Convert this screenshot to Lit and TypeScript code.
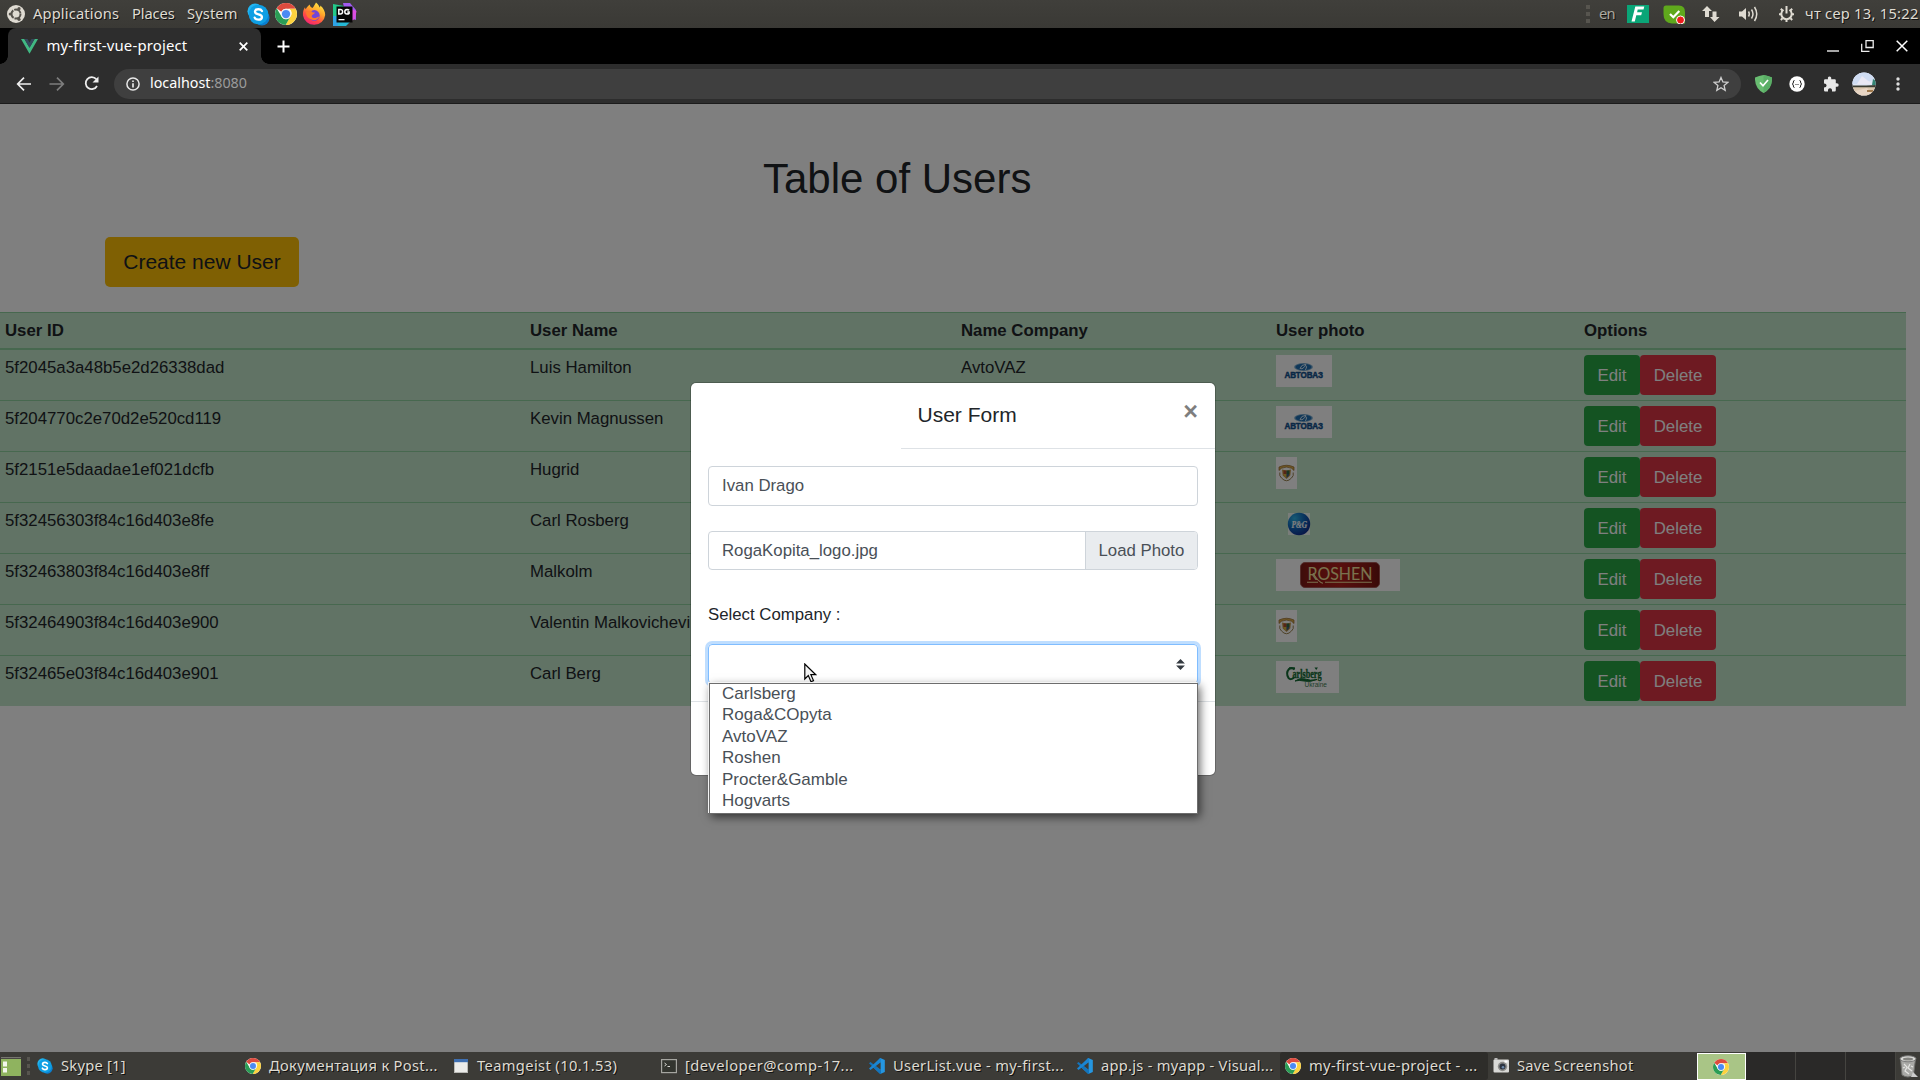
import { LitElement, html, css, nothing } from "lit";
import { customElement, property } from "lit/decorators.js";

const chromeIcon = (size: number) => html`<svg width=${size} height=${size} viewBox="0 0 24 24">
  <circle cx="12" cy="12" r="12" fill="#fff" />
  <path d="M12 0A12 12 0 0 1 22.6 6.4H12A5.6 5.6 0 0 0 6.9 9.6L1.8 5.7A12 12 0 0 1 12 0z" fill="#dd4b3e" />
  <path d="M22.6 6.4A12 12 0 0 1 11.6 24L16.9 14.8A5.6 5.6 0 0 0 15.5 6.4z" fill="#fdd23e" />
  <path d="M1.8 5.7L7.1 14.8A5.6 5.6 0 0 0 16.9 14.8L11.6 24A12 12 0 0 1 1.8 5.7z" fill="#2a9d55" />
  <circle cx="12" cy="12" r="5.6" fill="#f1f1f1" />
  <circle cx="12" cy="12" r="4.5" fill="#4a8af4" />
</svg>`;

const skypeIcon = (size: number) => html`<svg width=${size} height=${size} viewBox="0 0 24 24">
  <circle cx="8.5" cy="8.5" r="8" fill="#22b5f0" />
  <circle cx="15.5" cy="15.5" r="8" fill="#0b7fd0" />
  <circle cx="12" cy="12" r="10.3" fill="#0e9fe4" />
  <path d="M15.6 8.4C14.9 7 13.600 6.500 12 6.500c-2.200 0-3.700 1-3.700 2.700 0 3.700 7.300 1.800 7.300 5.300 0 1.800-1.500 2.900-3.700 2.900-1.900 0-3.300-.7-3.900-2.200" fill="none" stroke="#fff" stroke-width="2.400" stroke-linecap="round" />
</svg>`;

const vscodeIcon = html`<svg width="16" height="18" viewBox="0 0 16 18">
  <path d="M11.300 1L15.800 3V15L11.300 17L3.500 9.800z" fill="#2596e0" />
  <path d="M0 6.200L1.500 5L12 13.200V17H11.200z" fill="#1274bd" />
  <path d="M0 11.600L1.500 12.900L12 4.800V1H11.200z" fill="#1a85d2" />
  <path d="M11.600 5.300V12.700L6.800 9z" fill="#3c3b37" />
</svg>`;

const firefoxIcon = html`<svg width="24" height="24" viewBox="0 0 24 24">
  <defs>
    <linearGradient id="ff" x1="0.8" y1="0" x2="0.25" y2="1">
      <stop offset="0" stop-color="#fff04a" /><stop offset=".4" stop-color="#ffa42a" />
      <stop offset=".7" stop-color="#ff4b45" /><stop offset="1" stop-color="#f5207a" />
    </linearGradient>
  </defs>
  <path d="M14 .5c2 1.500 3.200 3.500 3.600 5 .7-.4.800-1.300.7-2C21.500 6 23.300 9.500 23.200 13A11.200 11 0 0 1 1 13.500C.600 10 1.700 7 3 5.200c.1 1 .4 1.500.8 2C5.500 3.800 7.300 3.300 7.800 2.500c0 1.500.7 2.700 2.700 3.400C12 4.500 12.800 2.300 14 .5z" fill="url(#ff)" />
  <circle cx="12.300" cy="13.500" r="5.400" fill="#7446d8" />
  <path d="M4 10c3-2 5.500-1.500 6.700.5h2.300c-.6 1.800-2.500 1.700-3.200 3.300-.5 1.200.8 2.500 2.400 2.300 2-.2 3-.8 5.200-1.600-1.200 3.300-4.500 4.200-7.500 3.300C6 16.500 4 14 4 10z" fill="#ff7a2c" />
</svg>`;

const datagripIcon = html`<svg width="25" height="25" viewBox="0 0 25 25">
  <path d="M1 2L12 4L10 13L1 23z" fill="#23c98a" />
  <path d="M11 1L18 1L24 8L24 18L14 14z" fill="#a05bf0" />
  <path d="M1 22L11 16L18 20L14 24L3 24z" fill="#26b9d6" />
  <path d="M19 7L24.500 9L23 17L19 19z" fill="#dd4ee0" />
  <path d="M1 14L6 14V24L1 24z" fill="#2fa4e6" />
  <rect x="4.500" y="4.500" width="16" height="16" fill="#060606" />
  <path d="M6.800 7.500V12H8.200Q10.600 12 10.600 9.700T8.200 7.500zM17.200 8.300Q16.200 7.400 15 7.400Q12.800 7.500 12.800 9.800T15 12.100Q16.400 12.100 17.100 11.400V10H15.300" fill="none" stroke="#fff" stroke-width="1.500" />
  <rect x="6.500" y="17" width="6" height="1.300" fill="#fff" />
</svg>`;

const AVTOVAZ = html`<svg width="56" height="32" viewBox="0 0 56 32">
  <rect width="56" height="32" fill="#fff" />
  <ellipse cx="27.500" cy="12" rx="9.500" ry="4" fill="#8fb9d8" />
  <ellipse cx="27.500" cy="12" rx="8.200" ry="3.300" fill="#1f6fb2" />
  <path d="M24 13.500q1-4 6-4.200q-1 3-4 4.500zM29 9.500q3 2 .5 5.500" fill="none" stroke="#d3e8f7" stroke-width="1" />
  <text x="8.500" y="23.400" textLength="38.500" lengthAdjust="spacingAndGlyphs" font-family="Liberation Sans, Arial, sans-serif" font-weight="700" font-size="9" fill="#12508c" stroke="#12508c" stroke-width=".5">АВТОВАЗ</text>
</svg>`;

const HOGWARTS = html`<svg width="21" height="32" viewBox="0 0 21 32">
  <rect width="21" height="32" fill="#fff" />
  <path d="M3 13.500V10Q10.500 6.500 18 10V13.500L15.500 11.200Q10.500 9 5.500 11.200z" fill="#d9aa4a" stroke="#93692a" stroke-width=".7" />
  <path d="M6 12.500L10.500 13.500L15 12.500L14.300 18.500L10.500 22L6.700 18.500z" fill="#c99a4a" />
  <path d="M7.500 13.500h3v3.500h-3z" fill="#b04a30" /><path d="M10.500 13.500h3v3.500h-3z" fill="#2f6a4a" />
  <path d="M7.500 17h3v4Q8 19.500 7.500 17z" fill="#d8b43c" /><path d="M10.500 17h3Q13 19.500 10.500 21z" fill="#3f5f80" />
  <path d="M3.800 15.500Q3 19 5.500 21Q10.500 26.500 15.500 21Q18 19 17.200 15.500" fill="none" stroke="#9c8450" stroke-width="1" />
</svg>`;

const PG = html`<svg width="44" height="32" viewBox="0 0 44 32">
  <defs><radialGradient id="pg" cx=".3" cy=".25" r=".9">
    <stop offset="0" stop-color="#2fb4e8" /><stop offset=".5" stop-color="#1065ba" /><stop offset="1" stop-color="#101f86" />
  </radialGradient></defs>
  <rect x="12" y="5" width="22" height="22" fill="#fff" opacity=".8" />
  <circle cx="23" cy="16" r="11.200" fill="url(#pg)" />
  <text x="15.500" y="19.600" textLength="15.500" lengthAdjust="spacingAndGlyphs" font-family="Liberation Serif, serif" font-weight="700" font-style="italic" font-size="11" fill="#fff" stroke="#fff" stroke-width=".2">P&amp;G</text>
</svg>`;

const ROSHEN = html`<svg width="124" height="32" viewBox="0 0 124 32">
  <defs><linearGradient id="ro"><stop offset="0" stop-color="#7a1a16" /><stop offset=".12" stop-color="#921a16" />
    <stop offset=".5" stop-color="#b01e1c" /><stop offset=".9" stop-color="#861814" /><stop offset="1" stop-color="#701412" /></linearGradient></defs>
  <rect width="124" height="32" fill="#fff" />
  <rect x="24.500" y="3.500" width="79" height="25" rx="4.500" fill="url(#ro)" stroke="#a85a56" />
  <text x="31.500" y="21" textLength="65" lengthAdjust="spacingAndGlyphs" font-family="Lato, sans-serif" font-size="17.500" fill="#f3e49c">ROSHEN</text>
  <path d="M31 23.200H42M49 23.200H96M37 14Q42 23 47 24.200" stroke="#f3e49c" fill="none" stroke-width="1.100" />
</svg>`;

const CARLSBERG = html`<svg width="63" height="32" viewBox="0 0 63 32">
  <rect width="63" height="32" fill="#fff" />
  <path d="M18.500 8.500Q16 5.800 13 8Q9.500 12 12.500 17Q15 19.500 18 16.500" fill="none" stroke="#146b34" stroke-width="2" />
  <path d="M13 7.300H19" stroke="#146b34" stroke-width="2" />
  <text x="16.500" y="16.500" textLength="29" lengthAdjust="spacingAndGlyphs" font-family="Liberation Serif, serif" font-weight="700" font-size="11.500" fill="#146b34" stroke="#146b34" stroke-width=".4">arlsberg</text>
  <path d="M38.500 6.500H42L40.200 9z" fill="#146b34" />
  <path d="M19 20Q24 16.500 29 18Q34 20 41 18.500Q34 21.500 28 20Q23 18.800 19 20z" fill="#146b34" stroke="#146b34" />
  <text x="28.500" y="25.500" textLength="22.500" lengthAdjust="spacingAndGlyphs" font-family="Liberation Sans, sans-serif" font-size="6.800" fill="#3f7d54">Ukraine</text>
</svg>`;

const USERS = [
  { id: "5f2045a3a48b5e2d26338dad", name: "Luis Hamilton", company: "AvtoVAZ", photo: AVTOVAZ },
  { id: "5f204770c2e70d2e520cd119", name: "Kevin Magnussen", company: "", photo: AVTOVAZ },
  { id: "5f2151e5daadae1ef021dcfb", name: "Hugrid", company: "", photo: HOGWARTS },
  { id: "5f32456303f84c16d403e8fe", name: "Carl Rosberg", company: "", photo: PG },
  { id: "5f32463803f84c16d403e8ff", name: "Malkolm", company: "", photo: ROSHEN },
  { id: "5f32464903f84c16d403e900", name: "Valentin Malkovichevi", company: "", photo: HOGWARTS },
  { id: "5f32465e03f84c16d403e901", name: "Carl Berg", company: "", photo: CARLSBERG },
];

const COMPANIES = ["Carlsberg", "Roga&COpyta", "AvtoVAZ", "Roshen", "Procter&Gamble", "Hogvarts"];

/** Top desktop panel: menus, launchers, indicators. */
@customElement("desktop-panel")
export class DesktopPanel extends LitElement {
  static styles = css`
    :host { display: flex; height: 28px; background: linear-gradient(#403f3b, #3a3935); color: #dfdbd2;
      font: 14.7px/26px "Noto Sans", "Open Sans", sans-serif; text-shadow: 1px 1px 0 #111; white-space: nowrap; }
    svg { display: block; flex: none; }
    .logo { width: 33px; padding-left: 7px; box-sizing: border-box; display: flex; align-items: center; }
    .apps { width: 99px; letter-spacing: 0.14px; }
    .places { width: 55px; letter-spacing: -0.1px; }
    .system { width: 57px; letter-spacing: 0.1px; }
    .cell { width: 28px; display: flex; align-items: center; justify-content: center; }
    .cell.dg { width: 33px; }
    .tray { margin-left: auto; width: 334px; display: flex; align-items: center; }
    .grip { width: 13px; display: grid; gap: 3px; }
    .grip i { width: 4px; height: 4px; background: #57554f; }
    .lang { width: 28px; color: #aba89f; height: 28px; letter-spacing: -0.9px; }
    .slot { display: flex; align-items: center; height: 28px; }
    .w36 { width: 36px; } .w39 { width: 39px; } .w37 { width: 37px; } .w27 { width: 27px; }
    .clock { height: 28px; letter-spacing: 0.27px; }
  `;
  render() {
    return html`
      <span class="logo"><svg width="18" height="18" viewBox="0 0 18 18">
        <circle cx="9" cy="9" r="9" fill="#dfdbd2" />
        <circle cx="9" cy="9" r="4.500" fill="none" stroke="#55524c" stroke-width="2" stroke-dasharray="8.400 1" />
        <circle cx="3.300" cy="9" r="1.600" fill="#55524c" /><circle cx="12" cy="3.700" r="1.600" fill="#55524c" /><circle cx="12" cy="14.300" r="1.600" fill="#55524c" />
      </svg></span>
      <span class="apps">Applications</span><span class="places">Places</span><span class="system">System</span>
      <span class="cell">${skypeIcon(23)}</span>
      <span class="cell">${chromeIcon(22)}</span>
      <span class="cell">${firefoxIcon}</span>
      <span class="cell dg">${datagripIcon}</span>
      <div class="tray">
        <span class="grip"><i></i><i></i><i></i></span>
        <span class="lang">en</span>
        <span class="slot w36"><svg width="22" height="18" viewBox="0 0 22 18"><rect width="22" height="18" fill="#0aa577" /><path d="M8.300 1.500H17.300L16.500 4.600H10.700L10.100 7.300H15L14.200 10.200H9.300L7.800 16.500H4.500z" fill="#fff" /></svg></span>
        <span class="slot w39"><svg width="23" height="19" viewBox="0 0 23 19"><path d="M3 .5H16Q22 .5 22 7V18.500H9Q.500 18 .500 9V3Q.500.5 3 .5z" fill="#5fa81c" /><path d="M7 9L10.300 12.200L16.300 6" fill="none" stroke="#fff" stroke-width="2.200" /><circle cx="17.500" cy="15" r="4" fill="#ee1c1c" stroke="#fff" /></svg></span>
        <span class="slot w37"><svg width="18" height="18" viewBox="0 0 18 18" fill="#dfdbd2"><path d="M5 1L10 6H7V12H3V6H0z" /><path d="M12.500 17L8 12H10.500V6.500H14.500V12H17.500z" /></svg></span>
        <span class="slot w39"><svg width="20" height="18" viewBox="0 0 20 18"><path d="M0 6.500H3L7 3V15L3 11.500H0z" fill="#dfdbd2" /><path d="M9.500 6.500Q11 9 9.500 11.500M12.500 4.500Q15.500 9 12.500 13.500M15.500 2Q20 9 15.500 16" fill="none" stroke="#dfdbd2" stroke-width="1.500" /></svg></span>
        <span class="slot w27"><svg width="17" height="18" viewBox="0 0 17 18" fill="none" stroke="#dfdbd2"><path d="M5.500 4.800A5.200 5.200 0 1 0 11.500 4.800" stroke-width="2" /><path d="M8.500 1V8.500" stroke-width="2" /><path d="M1 9.300H3M14 9.300H16M8.500 14.500V17M2.800 3.800L4.500 5.400M14.200 3.800L12.500 5.400M2.800 14.900L4.500 13.300M14.200 14.900L12.500 13.300" stroke-width="2" /></svg></span>
        <span class="clock">чт сер 13, 15:22</span>
      </div>`;
  }
}

/** Browser tab strip and address toolbar. */
@customElement("browser-chrome")
export class BrowserChrome extends LitElement {
  static styles = css`
    :host { display: flex; flex-direction: column; height: 76px; font-family: "Noto Sans", "Open Sans", sans-serif; color: #fff; white-space: nowrap; }
    svg { display: block; flex: none; }
    .strip { height: 36px; background: #000; display: flex; align-items: stretch; }
    .corner { width: 8px; background: radial-gradient(circle at 0 0, #000 7.500px, #2d2d2d 8px) bottom / 8px 8px no-repeat; }
    .corner.right { background-image: radial-gradient(circle at 100% 0, #000 7.500px, #2d2d2d 8px); }
    .tab { width: 253px; box-sizing: border-box; background: #2d2d2d; border-radius: 8px 8px 0 0; display: flex; align-items: center; padding: 0 13px 0 13px; }
    .title { margin-left: 8.500px; font-size: 14.900px; letter-spacing: 0.17px; line-height: 34px; height: 36px; flex: 1; }
    .plus { width: 29px; display: flex; align-items: center; justify-content: center; }
    .win { margin-left: auto; display: flex; align-items: center; gap: 22px; padding-right: 12px; }
    .bar { height: 39px; background: #2d2d2d; border-bottom: 1px solid #1b1b1b; display: flex; align-items: center; }
    .nav { width: 114px; display: flex; align-items: center; padding-left: 15.500px; gap: 17.500px; box-sizing: border-box; }
    .omni { width: 1627px; height: 30px; border-radius: 15px; background: #3f3f3f; display: flex; align-items: center; padding: 0 12px; box-sizing: border-box; }
    .url { margin-left: 10px; font-size: 14.300px; flex: 1; line-height: 28px; height: 30px; }
    .url span { color: #9b9b9b; }
    .ext { display: flex; padding-left: 6px; }
    .ext span { width: 33.500px; display: flex; justify-content: center; align-items: center; }
  `;
  render() {
    return html`
      <div class="strip">
        <span class="corner"></span>
        <div class="tab">
          <svg width="17" height="15" viewBox="0 0 17 15"><path d="M0 0H3.400L8.500 8.800L13.600 0H17L8.500 14.700z" fill="#41b883" /><path d="M3.400 0H6.500L8.500 3.500L10.500 0H13.600L8.500 8.800z" fill="#35495e" /></svg>
          <span class="title">my-first-vue-project</span>
          <svg width="9" height="9" viewBox="0 0 9 9"><path d="M.700.700L8.300 8.300M8.300.700L.700 8.300" stroke="#fff" stroke-width="1.700" /></svg>
        </div>
        <span class="corner right"></span>
        <span class="plus"><svg width="13" height="13" viewBox="0 0 13 13"><path d="M6.500.500V12.500M.500 6.500H12.500" stroke="#fff" stroke-width="2" /></svg></span>
        <div class="win">
          <svg width="12" height="12" viewBox="0 0 12 12"><path d="M0 11H12" stroke="#fff" stroke-width="1.300" /></svg>
          <svg width="13" height="12" viewBox="0 0 13 12" fill="none" stroke="#eee" stroke-width="1.300"><path d="M5 .7H12.200V7.500H5zM.700 3.700V11.300H8.500" /></svg>
          <svg width="12" height="12" viewBox="0 0 12 12"><path d="M.700.700L11.300 11.300M11.300.700L.700 11.300" stroke="#fff" stroke-width="1.500" /></svg>
        </div>
      </div>
      <div class="bar">
        <div class="nav">
          <svg width="16" height="14" viewBox="0 0 16 14" fill="none" stroke="#eee" stroke-width="1.700"><path d="M15 7H2M8 .700L1.700 7L8 13.300" /></svg>
          <svg width="16" height="14" viewBox="0 0 16 14" fill="none" stroke="#7d7d7d" stroke-width="1.700"><path d="M.500 7H14M8 .700L14.300 7L8 13.300" /></svg>
          <svg width="17" height="15" viewBox="0 0 17 15"><path d="M13.300 3.200A6 6 0 1 0 14 10" fill="none" stroke="#eee" stroke-width="1.800" /><path d="M15.500.500V6.500H9.500z" fill="#eee" /></svg>
        </div>
        <div class="omni">
          <svg width="14" height="14" viewBox="0 0 14 14"><circle cx="7" cy="7" r="6.100" fill="none" stroke="#e8e8e8" stroke-width="1.500" /><path d="M7 6.200V10.500M7 3.400V5" stroke="#e8e8e8" stroke-width="1.700" /></svg>
          <span class="url">localhost<span>:8080</span></span>
          <svg width="16" height="16" viewBox="0 0 16 16"><path d="M8 1.500L9.900 6L14.800 6.400L11.100 9.600L12.200 14.300L8 11.800L3.800 14.300L4.900 9.600L1.200 6.400L6.100 6z" fill="none" stroke="#cfcfcf" stroke-width="1.300" /></svg>
        </div>
        <div class="ext">
          <span><svg width="17" height="18" viewBox="0 0 17 18"><path d="M8.500 0Q13 .500 17 2.500Q17.500 13 8.500 18Q-.500 13 0 2.500Q4 .500 8.500 0z" fill="#68bc71" /><path d="M8.500 0Q13 .500 17 2.500Q17.500 13 8.500 18z" fill="#5aae66" /><path d="M5 7.500L8 10.800L13 5" fill="none" stroke="#fff" stroke-width="1.700" /></svg></span>
          <span><svg width="16" height="16" viewBox="0 0 16 16"><circle cx="8" cy="8" r="7.700" fill="#fff" /><path d="M5.500 4.500Q4.200 4.500 4.400 6Q4.500 7.800 3.200 8Q4.500 8.200 4.400 10Q4.200 11.500 5.500 11.500M10.500 4.500Q11.800 4.500 11.600 6Q11.500 7.800 12.800 8Q11.500 8.200 11.600 10Q11.800 11.500 10.500 11.500M6.500 8.500H7.500M8.500 8.500H9.500" fill="none" stroke="#222" /></svg></span>
          <span><svg width="16" height="16" viewBox="0 0 16 16" fill="#e8e8e8"><path d="M1 4.500Q1 3.200 2.200 3.200H5Q4.400 .500 6.500 .500T8.200 3.200H11.800Q12.800 3.200 12.800 4.200V7.300Q15.700 6.800 15.700 9T12.800 10.800V14.300Q12.800 15.500 11.700 15.500H9Q9.300 12.300 7 12.300T5 15.500H2.200Q1 15.500 1 14.300V11.500Q3.600 11.500 3.600 9.400T1 7.400z" /></svg></span>
          <span><svg width="24" height="24" viewBox="0 0 24 24">
            <defs><clipPath id="av"><circle cx="12" cy="12" r="11.600" /></clipPath></defs>
            <g clip-path="url(#av)"><rect width="24" height="24" fill="#dfe5f3" /><path d="M0 0H24V7L8 12L0 12z" fill="#cfdcf2" /><path d="M10 4L20 12H5z" fill="#e9e8f4" /><rect y="15" width="24" height="9" fill="#d9c6ae" /><path d="M3 19L15 16L20 22L8 24z" fill="#e8d5c4" /><path d="M0 13.500H14L24 13V15.300L0 15.300z" fill="#3b3d33" /><path d="M21 7L24 9V13H20z" fill="#348474" /><path d="M15 18h6v2h-6z" fill="#a0794c" /></g></svg></span>
          <span><svg width="4" height="14" viewBox="0 0 4 14" fill="#dedede"><circle cx="2" cy="2" r="1.700" /><circle cx="2" cy="7" r="1.700" /><circle cx="2" cy="12" r="1.700" /></svg></span>
        </div>
      </div>`;
  }
}

/** Table of users with the page heading. */
@customElement("user-list")
export class UserList extends LitElement {
  static styles = css`
    :host { display: flex; flex-direction: column; align-items: flex-start; color: #212529; font: 16.800px/25.200px "Liberation Sans", Arial, sans-serif; }
    h1 { margin: 50px 0 0 763px; font-size: 42px; font-weight: 400; line-height: 50px; }
    .create { margin: 33px 0 25px 105px; width: 194px; height: 50px; border: 0; border-radius: 5px; background: #ffc107; color: #212529; font: 21px/31.500px "Liberation Sans", Arial, sans-serif; padding: 0; }
    .table { width: 1906px; background: #c3e6cb; }
    .row { display: grid; grid-template-columns: 525px 431px 315px 308px 1fr; box-sizing: border-box; height: 51px; border-top: 1px solid #8fd19e; }
    .row.first { height: 50px; border-top: 0; }
    .row.head { height: 38px; border-bottom: 2px solid #8fd19e; font-weight: 700; }
    .row > span { padding: 5px; white-space: nowrap; }
    .row > .opts, .row > .photo { display: flex; align-items: flex-start; padding: 5px; }
    svg { display: block; }
    button.sm { height: 40px; border: 0; border-radius: 4px; color: #fff; padding: 0; font: 16.800px/25px "Liberation Sans", Arial, sans-serif; }
    .edit { width: 56px; background: #28a745; }
    .del { width: 76px; background: #dc3545; }
  `;
  render() {
    return html`
      <h1>Table of Users</h1>
      <button class="create">Create new User</button>
      <div class="table">
        <div class="row head"><span>User ID</span><span>User Name</span><span>Name Company</span><span>User photo</span><span>Options</span></div>
        ${USERS.map((u, i) => html`<div class="row ${i === 0 ? "first" : ""}">
          <span>${u.id}</span><span>${u.name}</span><span>${u.company || nothing}</span>
          <div class="photo">${u.photo}</div>
          <div class="opts"><button class="sm edit">Edit</button><button class="sm del">Delete</button></div>
        </div>`)}
      </div>`;
  }
}

/** Modal form with an open company select. */
@customElement("user-form")
export class UserForm extends LitElement {
  static styles = css`
    :host { display: flex; flex-direction: column; box-sizing: border-box; width: 524px; height: 392px; background: #fff; border-radius: 5px;
      box-shadow: 0 0 0 1px rgba(0, 0, 0, 0.2); color: #212529; font: 16.800px/25.200px "Liberation Sans", Arial, sans-serif; }
    svg { display: block; }
    header { margin-left: 210px; height: 66px; box-sizing: border-box; border-bottom: 1px solid #dee2e6; display: flex; justify-content: space-between; align-items: flex-start; padding: 16px 17px 0 16.500px; }
    h5 { margin: 0; font-size: 21px; font-weight: 400; line-height: 31px; }
    .close { font-size: 25.200px; font-weight: 700; line-height: 25px; opacity: 0.5; color: #000; }
    .body { padding: 17px 17px 0; display: flex; flex-direction: column; }
    .field { height: 40px; box-sizing: border-box; border: 1px solid #ced4da; border-radius: 4px; color: #495057; padding: 0 13px; line-height: 38px; }
    .file { margin-top: 25px; height: 39px; padding-right: 0; display: flex; justify-content: space-between; line-height: 38px; overflow: hidden; }
    .load { width: 112px; box-sizing: border-box; background: #e9ecef; border-left: 1px solid #ced4da; padding-left: 12.500px; }
    label { margin-top: 32px; line-height: 25px; }
    .select { margin-top: 17px; padding-right: 12px; border-color: #80bdff; box-shadow: 0 0 0 3px rgba(0, 123, 255, 0.25); display: flex; align-items: center; justify-content: flex-end; position: relative; }
    .list { position: absolute; left: 0; top: 38px; width: 489px; height: 131px; box-sizing: border-box; background: #fff; border: 1px solid #6d6d6d; box-shadow: -1px -1px 0 #f4f4f4, 2px 3px 9px rgba(0, 0, 0, 0.6); padding: 0 12px; font-size: 17px; }
    .list div { height: 21.400px; line-height: 19.400px; }
    footer { border-top: 1px solid #dee2e6; margin-top: 17px; flex: 1; }
    .cursor { position: absolute; left: 95px; top: 18px; }
  `;
  render() {
    return html`
      <header><h5>User Form</h5><span class="close">×</span></header>
      <div class="body">
        <div class="field">Ivan Drago</div>
        <div class="field file"><span>RogaKopita_logo.jpg</span><span class="load">Load Photo</span></div>
        <label>Select Company :</label>
        <div class="field select">
          <svg width="9" height="11" viewBox="0 0 4 5"><path fill="#343a40" d="M2 0L0 2h4zm0 5L0 3h4z" /></svg>
          <svg class="cursor" width="13" height="20" viewBox="0 0 13 20"><path d="M.800 1V16L4.300 12.600L7 18.700L9.500 17.600L6.900 11.700H11.800z" fill="#f4f4f4" stroke="#000" stroke-width="1.200" /></svg>
          <div class="list">${COMPANIES.map((c) => html`<div>${c}</div>`)}</div>
        </div>
      </div>
      <footer></footer>`;
  }
}

const terminalIcon = html`<svg width="16" height="15" viewBox="0 0 16 15"><rect x=".6" y=".6" width="14.800" height="13" fill="#33352f" stroke="#a5a5a0" stroke-width="1.200" /><path d="M3.500 4L5.500 5.500L3.500 7M6.500 7.500H9" fill="none" stroke="#d5d5d0" /></svg>`;
const windowIcon = html`<svg width="14" height="14" viewBox="0 0 14 14"><rect x=".5" y=".5" width="13" height="13" fill="#ececea" stroke="#babab6" /><rect width="14" height="3.200" fill="#3f6fb0" /></svg>`;
const cameraIcon = html`<svg width="17" height="16" viewBox="0 0 17 16"><rect x=".5" y="1.500" width="15.500" height="13" rx="1" fill="#d9d9d6" /><rect x="1.500" width="3" height="2" fill="#bbb" /><circle cx="9.500" cy="8.500" r="4.700" fill="#8d8d8a" /><circle cx="9.500" cy="8.500" r="3" fill="#2c3440" /><circle cx="10" cy="9.200" r="1.300" fill="#6d88a8" /><rect x="11.500" y="2.500" width="3" height="2" fill="#fff" /></svg>`;

const TASKS = [
  { icon: skypeIcon(16), label: "Skype [1]", cls: "k1" },
  { icon: chromeIcon(16), label: "Документация к Post...", cls: "k2" },
  { icon: windowIcon, label: "Teamgeist (10.1.53)", cls: "k3" },
  { icon: terminalIcon, label: "[developer@comp-17...", cls: "k4" },
  { icon: vscodeIcon, label: "UserList.vue - my-first...", cls: "k5" },
  { icon: vscodeIcon, label: "app.js - myapp - Visual...", cls: "k6" },
  { icon: chromeIcon(16), label: "my-first-vue-project - ...", cls: "k7 active" },
  { icon: cameraIcon, label: "Save Screenshot", cls: "k8" },
];

/** Bottom desktop panel with the window list and workspaces. */
@customElement("task-bar")
export class TaskBar extends LitElement {
  @property({ attribute: false }) tasks = TASKS;
  static styles = css`
    :host { display: flex; height: 28px; background: #3c3b37; color: #dfdbd2; font: 14.700px/27px "Noto Sans", "Open Sans", sans-serif; white-space: nowrap; }
    svg { display: block; flex: none; }
    .desk { width: 27px; padding: 5px 0 0 1px; box-sizing: border-box; }
    .grip { width: 5px; display: grid; gap: 3px; align-content: center; }
    .grip i { width: 3px; height: 4px; background: #57554f; }
    .task { width: 208px; box-sizing: border-box; padding-left: 4.500px; display: flex; align-items: center; gap: 7.500px; text-shadow: 1px 1px 0 #111; }
    .task b { width: 17px; display: flex; justify-content: center; }
    .task span { height: 28px; }
    .k1 { letter-spacing: 0.25px; } .k2 { letter-spacing: 0.3px; } .k3 { letter-spacing: 0.37px; } .k4 { letter-spacing: 0.47px; }
    .k5 { letter-spacing: 0.34px; } .k6 { letter-spacing: 0.25px; } .k7 { letter-spacing: 0.34px; } .k8 { letter-spacing: 0.25px; }
    .active { background: #2e2d2a; border-radius: 3px; }
    .ws { margin-left: 1px; width: 49px; box-sizing: border-box; border: 1px solid #fff; background: #a9c586; display: flex; align-items: center; justify-content: center; margin-top: 1px; padding-right: 2px; }
    .off { width: 50px; background: #2a2928; border-right: 1px solid #454440; box-sizing: border-box; }
    .trash { padding: 3px 0 0 2px; }
  `;
  render() {
    return html`
      <span class="desk"><svg width="20" height="19" viewBox="0 0 20 19"><rect width="20" height="1.200" y="0" fill="#777570" /><rect y="2" width="20" height="17" fill="#8fb35f" /><rect x="2" y="4.500" width="4" height="5" fill="#f4f7ee" /><rect x="2" y="11" width="4" height="4.500" fill="#f4f7ee" /></svg></span>
      <span class="grip"><i></i><i></i><i></i></span>
      ${this.tasks.map((t) => html`<div class="task ${t.cls}"><b>${t.icon}</b><span>${t.label}</span></div>`)}
      <span class="ws">${chromeIcon(16)}</span>
      <span class="off"></span><span class="off"></span><span class="off"></span>
      <span class="trash"><svg width="20" height="23" viewBox="0 0 20 23"><path d="M2.500 4L4 20Q10 24 15.500 20L17.500 4z" fill="#a9a9a6" stroke="#6e6e6b" /><ellipse cx="10" cy="3.800" rx="8" ry="3" fill="#d6d6d3" stroke="#777" /><ellipse cx="10" cy="4" rx="5" ry="1.500" fill="#83837f" /><path d="M6 9L9 12L7 16L11 19M12 9L10 13L14 16M5 13L7 12M13 11L15 12" stroke="#e4e4e2" fill="none" stroke-width="1.200" /><path d="M15 17L20 22H13z" fill="#ccc" /></svg></span>`;
  }
}

@customElement("app-root")
export class AppRoot extends LitElement {
  static styles = css`
    :host { display: flex; flex-direction: column; width: 1920px; height: 1080px; overflow: hidden; background: #3c3b37; }
    .page { position: relative; height: 948px; background: #fff; overflow: hidden; }
    .backdrop { position: absolute; inset: 0; background: rgba(0, 0, 0, 0.5); }
    .dialog { position: absolute; left: 691px; top: 279px; }
  `;
  render() {
    return html`
      <desktop-panel></desktop-panel>
      <browser-chrome></browser-chrome>
      <div class="page">
        <user-list></user-list>
        <div class="backdrop"></div>
        <user-form class="dialog"></user-form>
      </div>
      <task-bar></task-bar>`;
  }
}
